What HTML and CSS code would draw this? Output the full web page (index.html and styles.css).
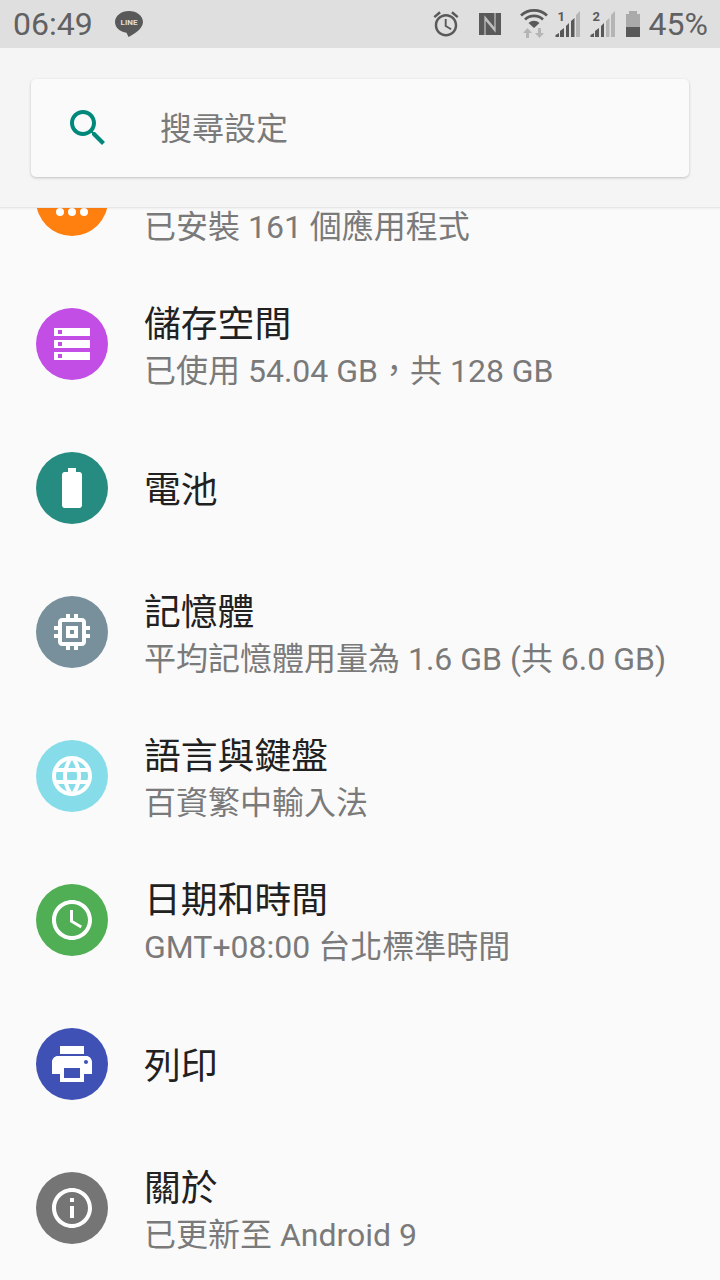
FILE: index.html
```html
<!DOCTYPE html>
<html lang="zh-Hant">

<head>
    <meta charset="UTF-8">
    <meta name="viewport" content="width=device-width, initial-scale=1.0">
    <title>設定</title>
    <link rel="stylesheet" href="styles.css">
</head>

<body>
    <div class="screen">
        <!-- 狀態列 -->
        <div class="status-bar">
            <span class="clock">06:49</span>
            <svg class="line-icon" width="30" height="28" viewBox="0 0 30 28">
                <path d="M15 1C7.300 1 1 5.800 1 12c0 5.800 5.200 10 11.500 10.700L14.500 27c3-1.600 14.500-7.300 14.500-15C29 5.800 22.700 1 15 1z" fill="#595959"/>
                <text x="15" y="15" text-anchor="middle" class="line-text">LINE</text>
            </svg>
            <div class="status-right">
                <svg class="alarm" width="30" height="30" viewBox="0 0 24 24" fill="#595959">
                    <path d="M22 5.720l-4.600-3.860-1.290 1.530 4.600 3.860L22 5.720zM7.880 3.390L6.600 1.860 2 5.710l1.290 1.530 4.590-3.850zM12.500 8H11v6l4.750 2.850.75-1.230-4-2.370V8zM12 4c-4.970 0-9 4.030-9 9s4.020 9 9 9c4.970 0 9-4.030 9-9s-4.030-9-9-9zm0 16c-3.870 0-7-3.130-7-7s3.130-7 7-7 7 3.130 7 7-3.130 7-7 7z"/>
                </svg>
                <svg class="nfc" width="24" height="24" viewBox="0 0 24 24">
                    <path d="M1 1h22v22H1z" fill="#595959"/>
                    <path d="M7 23V5l10 12M17 1v18L7 7" fill="none" stroke="#bdbdbd" stroke-width="1.300"/>
                </svg>
                <svg class="wifi" width="30" height="32" viewBox="0 0 30 32">
                    <path d="M2 7.500a19 19 0 0 1 26 0" fill="none" stroke="#595959" stroke-width="2.600"/>
                    <path d="M6 11.500a13 13 0 0 1 18 0" fill="none" stroke="#595959" stroke-width="2.600"/>
                    <path d="M9.500 15a8 8 0 0 1 11 0L15 20z" fill="#595959"/>
                    <path d="M8.500 20l-4.500 5h3v5h3v-5h3zM20.500 30l4.500-5h-3v-5h-3v5h-3z" fill="#b5b5b5"/>
                </svg>
                <svg class="signal" width="25" height="28" viewBox="0 0 25 28">
                    <text x="2.500" y="11" class="sim-text">1</text>
                    <path d="M.5 27v-2L4 23v4zM5 27v-6l4-3v9zM11 27V16l3-3v14zM16 27V11l3.500-3v19z" fill="#595959"/>
                    <path d="M21 27V5l4-4v26z" fill="#b5b5b5"/>
                </svg>
                <svg class="signal" width="25" height="28" viewBox="0 0 25 28">
                    <text x="2.500" y="11" class="sim-text">2</text>
                    <path d="M.5 27v-2L4 23v4zM5 27v-6l4-3v9zM11 27V16l3-3v14z" fill="#595959"/>
                    <path d="M16 27V11l3.500-3v19zM21 27V5l4-4v26z" fill="#b5b5b5"/>
                </svg>
                <svg class="battery" width="16" height="28" viewBox="0 0 16 28">
                    <path d="M4 1h8v3h3v13H1V4h3z" fill="#aaa"/>
                    <path d="M1 17h14v10H1z" fill="#595959"/>
                </svg>
                <span class="percent">45%</span>
            </div>
        </div>

        <!-- 搜尋 -->
        <div class="search-area">
            <div class="search-box">
                <svg class="search-icon" width="48" height="48" viewBox="0 0 24 24" fill="#00897b">
                    <path d="M15.500 14h-.79l-.28-.27C15.410 12.590 16 11.110 16 9.500 16 5.910 13.090 3 9.500 3S3 5.910 3 9.500 5.910 16 9.500 16c1.610 0 3.090-.59 4.230-1.570l.27.280v.79l5 4.990L20.490 19l-4.990-5zm-6 0C7.010 14 5 11.990 5 9.500S7.010 5 9.500 5 14 7.010 14 9.500 11.990 14 9.500 14z"/>
                </svg>
                <span class="search-text">搜尋設定</span>
            </div>
        </div>

        <div class="list-wrap">
            <div class="list">
                <div class="row">
                    <div class="circle orange">
                        <svg width="48" height="48" viewBox="0 0 48 48" fill="#fff">
                            <circle cx="12" cy="12" r="4"/>
                            <circle cx="24" cy="12" r="4"/>
                            <circle cx="36" cy="12" r="4"/>
                            <circle cx="12" cy="24" r="4"/>
                            <circle cx="24" cy="24" r="4"/>
                            <circle cx="36" cy="24" r="4"/>
                            <circle cx="12" cy="36" r="4"/>
                            <circle cx="24" cy="36" r="4"/>
                            <circle cx="36" cy="36" r="4"/>
                        </svg>
                    </div>
                    <div class="row-text">
                        <div class="title-blank"></div>
                        <div class="sub">已安裝 161 個應用程式</div>
                    </div>
                </div>

                <div class="row">
                    <div class="circle purple">
                        <svg width="48" height="48" viewBox="0 0 24 24" fill="#fff">
                            <path fill-rule="evenodd" d="M3 4h18v4H3zM5 5v2h2V5zM3 10h18v4H3zM5 11v2h2v-2zM3 16h18v4H3zM5 17v2h2v-2z"/>
                        </svg>
                    </div>
                    <div class="row-text">
                        <div class="title">儲存空間</div>
                        <div class="sub">已使用 54.04 GB，共 128 GB</div>
                    </div>
                </div>

                <div class="row">
                    <div class="circle teal">
                        <svg width="48" height="48" viewBox="0 0 24 24" fill="#fff">
                            <path d="M15.670 4H14V2h-4v2H8.330C7.600 4 7 4.600 7 5.330v15.330C7 21.400 7.600 22 8.330 22h7.330c.74 0 1.340-.6 1.340-1.330V5.330C17 4.600 16.400 4 15.670 4z"/>
                        </svg>
                    </div>
                    <div class="row-text">
                        <div class="title">電池</div>
                    </div>
                </div>

                <div class="row">
                    <div class="circle slate">
                        <svg width="48" height="48" viewBox="0 0 24 24" fill="#fff">
                            <path d="M15 9H9v6h6V9zm-2 4h-2v-2h2v2zm8-2V9h-2V7c0-1.100-.9-2-2-2h-2V3h-2v2h-2V3H9v2H7c-1.100 0-2 .9-2 2v2H3v2h2v2H3v2h2v2c0 1.100.9 2 2 2h2v2h2v-2h2v2h2v-2h2c1.100 0 2-.9 2-2v-2h2v-2h-2v-2h2zm-4 6H7V7h10v10z"/>
                        </svg>
                    </div>
                    <div class="row-text">
                        <div class="title">記憶體</div>
                        <div class="sub">平均記憶體用量為 1.6 GB (共 6.0 GB)</div>
                    </div>
                </div>

                <div class="row">
                    <div class="circle cyan">
                        <svg width="48" height="48" viewBox="0 0 24 24" fill="#fff">
                            <path d="M11.990 2C6.470 2 2 6.480 2 12s4.470 10 9.990 10C17.520 22 22 17.520 22 12S17.520 2 11.990 2zm6.930 6h-2.950c-.32-1.250-.78-2.450-1.380-3.560 1.840.63 3.370 1.910 4.330 3.560zM12 4.040c.83 1.200 1.480 2.530 1.910 3.960h-3.820c.43-1.430 1.080-2.760 1.910-3.960zM4.260 14C4.100 13.360 4 12.690 4 12s.1-1.360.26-2h3.380c-.08.66-.14 1.320-.14 2 0 .68.06 1.340.14 2H4.260zm.82 2h2.950c.32 1.250.78 2.450 1.380 3.560-1.840-.63-3.370-1.900-4.330-3.560zm2.950-8H5.080c.96-1.660 2.490-2.930 4.330-3.560C8.810 5.550 8.350 6.750 8.030 8zM12 19.960c-.83-1.200-1.480-2.530-1.910-3.960h3.820c-.43 1.430-1.080 2.760-1.910 3.960zM14.340 14H9.660c-.09-.66-.16-1.320-.16-2 0-.68.07-1.350.16-2h4.680c.09.65.16 1.320.16 2 0 .68-.07 1.340-.16 2zm.25 5.560c.6-1.110 1.060-2.310 1.380-3.560h2.950c-.96 1.650-2.490 2.930-4.330 3.560zM16.360 14c.08-.66.14-1.320.14-2 0-.68-.06-1.340-.14-2h3.380c.16.64.26 1.310.26 2s-.1 1.360-.26 2h-3.380z"/>
                        </svg>
                    </div>
                    <div class="row-text">
                        <div class="title">語言與鍵盤</div>
                        <div class="sub">百資繁中輸入法</div>
                    </div>
                </div>

                <div class="row">
                    <div class="circle green">
                        <svg width="48" height="48" viewBox="0 0 24 24" fill="#fff">
                            <path d="M11.990 2C6.470 2 2 6.480 2 12s4.470 10 9.990 10C17.520 22 22 17.520 22 12S17.520 2 11.990 2zM12 20c-4.420 0-8-3.580-8-8s3.580-8 8-8 8 3.580 8 8-3.580 8-8 8zm.5-13H11v6l5.250 3.150.75-1.230-4.500-2.670z"/>
                        </svg>
                    </div>
                    <div class="row-text">
                        <div class="title">日期和時間</div>
                        <div class="sub">GMT+08:00 台北標準時間</div>
                    </div>
                </div>

                <div class="row">
                    <div class="circle indigo">
                        <svg width="48" height="48" viewBox="0 0 24 24" fill="#fff">
                            <path d="M19 8H5c-1.660 0-3 1.340-3 3v6h4v4h12v-4h4v-6c0-1.660-1.340-3-3-3zm-3 11H8v-5h8v5zm3-7c-.55 0-1-.45-1-1s.45-1 1-1 1 .45 1 1-.45 1-1 1zm-1-9H6v4h12V3z"/>
                        </svg>
                    </div>
                    <div class="row-text">
                        <div class="title">列印</div>
                    </div>
                </div>

                <div class="row">
                    <div class="circle gray">
                        <svg width="48" height="48" viewBox="0 0 24 24" fill="#fff">
                            <path d="M11 7h2v2h-2zm0 4h2v6h-2zm1-9C6.480 2 2 6.480 2 12s4.480 10 10 10 10-4.480 10-10S17.520 2 12 2zm0 18c-4.410 0-8-3.590-8-8s3.590-8 8-8 8 3.590 8 8-3.590 8-8 8z"/>
                        </svg>
                    </div>
                    <div class="row-text">
                        <div class="title">關於</div>
                        <div class="sub">已更新至 Android 9</div>
                    </div>
                </div>
            </div>
        </div>
    </div>
</body>

</html>
```

FILE: styles.css
```css
body {
    margin: 0;
    padding: 0;
    background-color: #fafafa;
    font-family: Roboto, "Noto Sans CJK TC", sans-serif;
}

.screen {
    width: 720px;
    height: 1280px;
    display: flex;
    flex-direction: column;
    overflow: hidden;
}

.status-bar {
    height: 48px;
    flex: none;
    display: flex;
    align-items: center;
    background-color: #dfdfdf;
    color: #616161;
}

.clock {
    margin-left: 13px;
    font-size: 32px;
}

.line-icon {
    margin-left: 21px;
    margin-top: -1px;
}

.line-text {
    font-family: Roboto, sans-serif;
    font-size: 8px;
    font-weight: 700;
    fill: #dfdfdf;
}

.sim-text {
    font-family: Roboto, sans-serif;
    font-size: 13px;
    font-weight: 700;
    fill: #595959;
}

.status-right {
    margin-left: auto;
    margin-right: 12px;
    display: flex;
    align-items: center;
}

.nfc {
    margin-left: 16px;
    margin-right: -1px;
}

.alarm {
    margin-right: 0;
    transform: translateX(-1px);
}

.wifi {
    margin-left: 18px;
}

.signal {
    margin-left: 6px;
}

.signal + .signal {
    margin-left: 10px;
}

.battery {
    margin-left: 10px;
}

.percent {
    margin-left: 8px;
    font-size: 32px;
}

.search-area {
    height: 160px;
    flex: none;
    box-sizing: border-box;
    padding: 31px 31px 0;
    background-color: #f5f5f5;
    border-bottom: 1px solid #e6e6e6;
    box-shadow: 0 1px 2px rgba(0, 0, 0, 0.05);
    position: relative;
    z-index: 1;
}

.search-box {
    height: 98px;
    display: flex;
    align-items: center;
    background-color: #fafafa;
    border-radius: 5px;
    box-shadow: 0 1px 3px rgba(0, 0, 0, 0.22);
}

.search-icon {
    margin-left: 33px;
}

.search-text {
    margin-left: 48px;
    padding-bottom: 4px;
    font-size: 32px;
    color: #7a7a7a;
}

.list-wrap {
    flex: 1;
    overflow: hidden;
}

/* list is scrolled, first row sits under the search header */
.list {
    margin-top: -80px;
}

.row {
    height: 144px;
    display: flex;
    align-items: center;
    padding-left: 36px;
}

.circle {
    width: 72px;
    height: 72px;
    flex: none;
    border-radius: 50%;
    display: flex;
    align-items: center;
    justify-content: center;
}

.orange { background-color: #ff7f0f; }
.purple { background-color: #c24ee6; }
.teal { background-color: #268b80; }
.slate { background-color: #78909c; }
.cyan { background-color: #86dde9; }
.green { background-color: #50ae55; }
.indigo { background-color: #3f51b5; }
.gray { background-color: #757575; }

.row-text {
    margin-left: 36px;
    padding-top: 7px;
}

.title {
    font-size: 36.800px;
    line-height: 46px;
    color: #212121;
}

.title:only-child {
    margin-top: -2px;
}

.title-blank {
    height: 46px;
}

.sub {
    font-size: 32px;
    line-height: 46px;
    color: #7a7a7a;
}
```
